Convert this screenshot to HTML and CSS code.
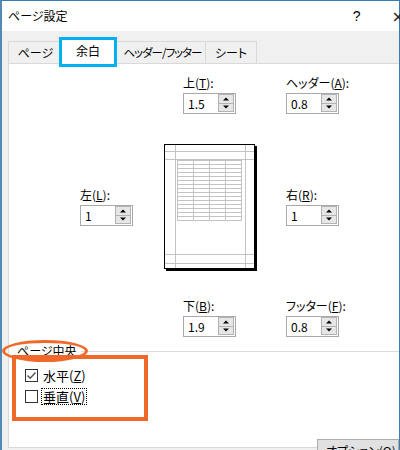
FILE: index.html
```html
<!DOCTYPE html>
<html lang="ja">
<head>
<meta charset="utf-8">
<link rel="stylesheet" href="styles.css">
</head>
<body>
<div class="window">
  <div class="titlebar">
    <span class="title">ページ設定</span>
    <span class="help">?</span>
    <span class="close">×</span>
  </div>
  <div class="client">
    <div class="tabs">
      <div class="tab t1">ページ</div>
      <div class="tab sel">余白</div>
      <div class="tab t3">ヘッダー/フッター</div>
      <div class="tab t4">シート</div>
    </div>
    <div class="panel">
      <div class="row r1">
        <div class="field">
          <div class="lbl">上(<u>T</u>):</div>
          <div class="spin"><span class="val">1.5</span><span class="arrows"><span class="ab up"></span><span class="ab dn"></span></span></div>
        </div>
        <div class="field">
          <div class="lbl">ヘッダー(<u>A</u>):</div>
          <div class="spin"><span class="val">0.8</span><span class="arrows"><span class="ab up"></span><span class="ab dn"></span></span></div>
        </div>
      </div>
      <div class="row r2">
        <div class="field side left">
          <div class="lbl">左(<u>L</u>):</div>
          <div class="spin"><span class="val">1</span><span class="arrows"><span class="ab up"></span><span class="ab dn"></span></span></div>
        </div>
        <div class="preview">
          <svg width="94" height="128" viewBox="0 0 94 128">
            <rect x="2" y="2" width="91" height="125" fill="#000"/>
            <rect x="0.5" y="0.5" width="90" height="124" fill="#fff" stroke="#000"/>
            <g stroke="#c3c3c3" stroke-width="1" fill="none">
              <line x1="11.5" y1="1" x2="11.5" y2="124"/>
              <line x1="81.5" y1="1" x2="81.5" y2="124"/>
              <line x1="1" y1="7.5" x2="90" y2="7.5"/>
              <line x1="1" y1="15.5" x2="90" y2="15.5"/>
              <line x1="1" y1="110.5" x2="90" y2="110.5"/>
              <line x1="1" y1="119.5" x2="90" y2="119.5"/>
              <rect x="13.5" y="16.5" width="64" height="60"/>
              <line x1="29.5" y1="16.5" x2="29.5" y2="76.5"/>
              <line x1="45.5" y1="16.5" x2="45.5" y2="76.5"/>
              <line x1="61.5" y1="16.5" x2="61.5" y2="76.5"/>
              <line x1="13.5" y1="20.5" x2="77.5" y2="20.5"/>
              <line x1="13.5" y1="24.5" x2="77.5" y2="24.5"/>
              <line x1="13.5" y1="28.5" x2="77.5" y2="28.5"/>
              <line x1="13.5" y1="32.5" x2="77.5" y2="32.5"/>
              <line x1="13.5" y1="36.5" x2="77.5" y2="36.5"/>
              <line x1="13.5" y1="40.5" x2="77.5" y2="40.5"/>
              <line x1="13.5" y1="44.5" x2="77.5" y2="44.5"/>
              <line x1="13.5" y1="48.5" x2="77.5" y2="48.5"/>
              <line x1="13.5" y1="52.5" x2="77.5" y2="52.5"/>
              <line x1="13.5" y1="56.5" x2="77.5" y2="56.5"/>
              <line x1="13.5" y1="60.5" x2="77.5" y2="60.5"/>
              <line x1="13.5" y1="64.5" x2="77.5" y2="64.5"/>
              <line x1="13.5" y1="68.5" x2="77.5" y2="68.5"/>
              <line x1="13.5" y1="72.5" x2="77.5" y2="72.5"/>
            </g>
          </svg>
        </div>
        <div class="field side">
          <div class="lbl">右(<u>R</u>):</div>
          <div class="spin"><span class="val">1</span><span class="arrows"><span class="ab up"></span><span class="ab dn"></span></span></div>
        </div>
      </div>
      <div class="row r3">
        <div class="field">
          <div class="lbl">下(<u>B</u>):</div>
          <div class="spin"><span class="val">1.9</span><span class="arrows"><span class="ab up"></span><span class="ab dn"></span></span></div>
        </div>
        <div class="field">
          <div class="lbl">フッター(<u>F</u>):</div>
          <div class="spin"><span class="val">0.8</span><span class="arrows"><span class="ab up"></span><span class="ab dn"></span></span></div>
        </div>
      </div>
      <div class="group">
        <div class="ghead"><span class="gtitle">ページ中央</span><span class="gline"></span></div>
        <div class="chk">
          <span class="box"><svg width="11" height="11" viewBox="0 0 11 11"><path d="M1.5 5.5 L4.2 8.2 L9.5 2.5" fill="none" stroke="#555" stroke-width="1.5"/></svg></span>
          <span class="ctext">水平(<u>Z</u>)</span>
        </div>
        <div class="chk">
          <span class="box"></span>
          <span class="ctext focus">垂直(<u>V</u>)</span>
        </div>
      </div>
      <div class="optbtn">オプション(<u>O</u>)...</div>
      <div class="mark-ellipse"></div>
      <div class="mark-rect"></div>
    </div>
  </div>
</div>
</body>
</html>
```
FILE: styles.css
```css
html, body {
  margin: 0;
  padding: 0;
  width: 400px;
  height: 450px;
  overflow: hidden;
  background: #f0f0f0;
}
body {
  font-family: "Noto Sans CJK JP", "Noto Sans", sans-serif;
  font-size: 12px;
  color: #000;
  font-feature-settings: "palt";
}
u { text-decoration: underline; text-underline-offset: 1px; }

.window {
  width: 400px;
  height: 450px;
  box-sizing: border-box;
  border-left: 2px solid #4f8ab9;
  border-top: 1px solid #3d7cb0;
  border-right: 1px solid #3d7cb0;
  display: flex;
  flex-direction: column;
}
.titlebar {
  height: 30px;
  background: #fff;
  display: flex;
  align-items: center;
  position: relative;
  flex: none;
}
.title {
  margin-left: 6px;
  font-size: 12px;
  line-height: 16px;
}
.help {
  margin-left: auto;
  margin-right: 31px;
  font-family: "Liberation Sans", sans-serif;
  font-size: 14px;
}
.close {
  font-family: "DejaVu Sans", sans-serif;
  font-size: 16px;
  margin-right: -6px;
  color: #222;
}

.client {
  flex: 1;
  background: #f0f0f0;
  padding: 6px 0 0 6px;
  display: flex;
  flex-direction: column;
  min-height: 0;
}
.tabs {
  display: flex;
  align-items: flex-end;
  height: 26px;
  flex: none;
  position: relative;
  z-index: 2;
}
.tab {
  box-sizing: border-box;
  height: 22px;
  border: 1px solid #d9d9d9;
  border-bottom: none;
  background: #f0f0f0;
  text-align: center;
  line-height: 21px;
  font-size: 12px;
  margin-right: -1px;
  white-space: nowrap;
}
.t1 { width: 53px; padding-left: 2px; }
.t3 { width: 90px; font-size: 11.5px; letter-spacing: -1px; padding-left: 3px; }
.t4 { width: 52px; }
.sel {
  width: 58px;
  height: 30px;
  margin-bottom: -4px;
  margin-right: -1px;
  margin-left: -1px;
  border: 3px solid #00b0f0;
  background: #fff;
  line-height: 22px;
  position: relative;
  z-index: 3;
}

.panel {
  position: relative;
  flex: none;
  height: 385px;
  box-sizing: border-box;
  background: #fff;
  border: 1px solid #d9d9d9;
  border-right: none;
}
.row { display: flex; }
.r1 { padding: 11px 0 0 174px; }
.r2 { margin-top: 30px; padding-left: 71px; }
.r3 { margin-top: 26px; padding-left: 174px; }
.field { width: 103px; }
.side { margin-top: 43px; }
.left { width: 84px; }
.preview { width: 122px; height: 128px; }
.preview svg { display: block; }

.lbl { line-height: 16px; height: 16px; margin-bottom: 2px; white-space: nowrap; }
.spin {
  width: 53px;
  height: 21px;
  box-sizing: border-box;
  border: 1px solid #a9a9a9;
  display: flex;
  background: #fff;
}
.val {
  flex: 1;
  padding-left: 4px;
  line-height: 19px;
  font-size: 12px;
}
.arrows {
  width: 17px;
  display: flex;
  flex-direction: column;
  padding: 0 1px 1px 0;
  box-sizing: border-box;
}
.ab {
  flex: 1;
  border: 1px solid #b3b3b3;
  background: #e6e6e6;
  position: relative;
}
.ab + .ab { border-top: none; }
.ab::after {
  content: "";
  position: absolute;
  left: 50%;
  top: 50%;
  width: 0;
  height: 0;
  border-left: 3px solid transparent;
  border-right: 3px solid transparent;
  transform: translate(-50%, -50%);
}
.up::after { border-bottom: 3px solid #000; }
.dn::after { border-top: 3px solid #000; }

.group { margin-top: 6px; padding-left: 8px; }
.ghead { display: flex; align-items: center; height: 16px; }
.gtitle { line-height: 16px; padding-right: 4px; }
.gline { flex: 1; height: 1px; background: #dcdcdc; }
.chk {
  display: flex;
  align-items: center;
  height: 21px;
  padding-left: 8px;
}
.ghead + .chk { margin-top: 6px; }
.box {
  width: 13px;
  height: 13px;
  box-sizing: border-box;
  border: 1px solid #333;
  background: #fff;
  display: flex;
  align-items: center;
  justify-content: center;
}
.box svg { display: block; }
.ctext {
  margin-left: 3px;
  line-height: 15px;
  padding: 0 1px;
  border: 1px solid transparent;
  font-size: 13px;
}
.focus { border: 1px dotted #000; }

.optbtn {
  position: absolute;
  top: 375px;
  left: 308px;
  width: 82px;
  height: 23px;
  box-sizing: border-box;
  background: #e1e1e1;
  border: 1px solid #adadad;
  padding-left: 8px;
  line-height: 21px;
  z-index: 2;
  white-space: nowrap;
}
.mark-ellipse {
  position: absolute;
  left: -7px;
  top: 276px;
  width: 86px;
  height: 22px;
  box-sizing: border-box;
  border: 3px solid #f0692a;
  border-radius: 50%;
}
.mark-rect {
  position: absolute;
  left: 3px;
  top: 291px;
  width: 136px;
  height: 66px;
  box-sizing: border-box;
  border: 4px solid #f0692a;
}
```
